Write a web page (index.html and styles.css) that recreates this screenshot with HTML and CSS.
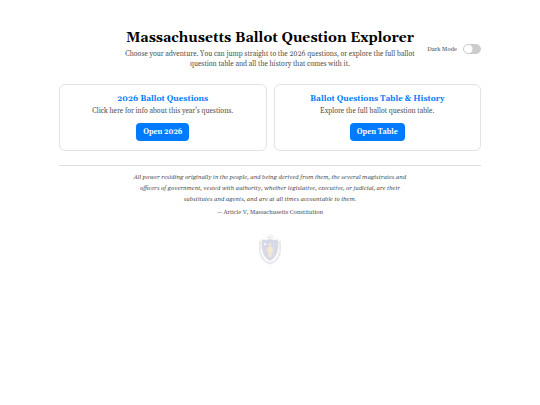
FILE: index.html
```html
<!DOCTYPE html>
<html lang="en">
<head>
<meta charset="utf-8">
<meta name="viewport" content="width=device-width, initial-scale=1">
<title>Massachusetts Ballot Question Explorer</title>
<link rel="stylesheet" href="styles.css">
</head>
<body>
<main class="page">
  <header class="header">
    <div class="intro">
      <h1>Massachusetts Ballot Question Explorer</h1>
      <p>Choose your adventure. You can jump straight to the 2026 questions, or explore the full ballot question table and all the history that comes with it.</p>
    </div>
    <label class="toggle">Dark Mode <input type="checkbox" class="switch"></label>
  </header>
  <section class="cards">
    <article class="card">
      <h2>2026 Ballot Questions</h2>
      <p>Click here for info about this year’s questions.</p>
      <a class="button" href="#2026">Open 2026</a>
    </article>
    <article class="card">
      <h2>Ballot Questions Table &amp; History</h2>
      <p>Explore the full ballot question table.</p>
      <a class="button" href="#table">Open Table</a>
    </article>
  </section>
  <footer class="footer">
    <blockquote>All power residing originally in the people, and being derived from them, the several magistrates and officers of government, vested with authority, whether legislative, executive, or judicial, are their substitutes and agents, and are at all times accountable to them.</blockquote>
    <p class="source">— Article V, Massachusetts Constitution</p>
    <svg class="seal" viewBox="0 0 22 32" role="img" aria-label="Massachusetts coat of arms">
      <path d="M7 4.500h8" stroke="#b9bccb" stroke-width="1"/>
      <path d="M8 3.500c1-1 2-.3 3-.3l2-1.700 1 1-2 1.500" fill="none" stroke="#e2c58b" stroke-width="1"/>
      <path d="M1.500 8C-.2 17 1 27 11 30.500 21 27 22.200 17 20.500 8" fill="none" stroke="#b4b7c6" stroke-width="2"/>
      <path d="M1.500 13l2 1M1 18l3 0M2.500 23l3-1M6 28l2-2M20.500 13l-2 1M21 18h-3M19.500 23l-3-1M16 28l-2-2" stroke="#fff" stroke-width=".7"/>
      <path d="M3 6.500q4 1.500 8-.8 4 2.300 8 .8C20 16 18.500 24 11 28 3.500 24 2 16 3 6.500z" fill="#7880b4" stroke="#d3bd8b" stroke-width=".6"/>
      <path d="M11 10.500v3M9 14h4l.6 5h-1.300v5h-1v-4h-.7v4h-1v-5H8.400zM14.500 10v13M8 15l-1.300 3" fill="#e6bb5a" stroke="#e6bb5a" stroke-width=".5"/>
      <circle cx="11" cy="11.500" r="1.300" fill="#e6bb5a"/>
      <path d="M6 9.500l.5 1 1 .2-.8.700.2 1-.9-.5-.9.500.2-1-.8-.700 1-.2z" fill="#fff"/>
    </svg>
  </footer>
</main>
</body>
</html>
```
FILE: styles.css
```css
* {
  box-sizing: border-box;
}

body {
  margin: 0;
  background: #fff;
  color: #555;
  font: 7px/10px Georgia, Gelasio, serif;
  text-align: center;
}

h1, h2, p, blockquote {
  margin: 0;
}

.page {
  max-width: 422px;
  margin: 0 auto;
  padding-top: 28px;
}

.header {
  display: grid;
  grid-template-columns: 1fr auto 1fr;
  align-items: center;
}

.intro {
  grid-column: 2;
  max-width: 296px;
}

h1 {
  margin-bottom: 1px;
  color: #000;
  font-size: 14px;
  line-height: 20px;
}

.toggle {
  display: flex;
  align-items: center;
  justify-self: end;
  gap: 6px;
  font-size: 6px;
  white-space: nowrap;
}

.switch {
  appearance: none;
  flex: none;
  width: 18px;
  height: 10px;
  margin: 0;
  border: 1px solid #ccc;
  border-radius: 5px;
  background: radial-gradient(circle at 4px 4px, #fff 4px, #ccc 5px);
}

.switch:checked {
  border-color: #007bff;
  background: radial-gradient(circle at 12px 4px, #fff 4px, #007bff 5px);
}

.cards {
  display: grid;
  grid-template-columns: 1fr 1fr;
  gap: 7px;
  margin-top: 15px;
}

.card {
  padding: 8px;
  border: 1px solid #e3e3e3;
  border-radius: 6px;
}

h2 {
  color: #007bff;
  font-size: 8px;
  line-height: 13px;
}

.button {
  display: inline-block;
  margin: 7px 0 1px;
  padding: 4px 7px;
  border-radius: 4px;
  background: #007bff;
  color: #fff;
  font-weight: bold;
  text-decoration: none;
}

.footer {
  margin-top: 14px;
  padding-top: 6px;
  border-top: 1px solid #ddd;
}

blockquote {
  max-width: 288px;
  margin: 0 auto;
  font-size: 6px;
  font-style: italic;
  line-height: 11px;
}

.source {
  margin-top: 2px;
  font-size: 6px;
}

.seal {
  display: block;
  width: 22px;
  height: 32px;
  margin: 16px auto 0;
  opacity: 0.3;
}
```
